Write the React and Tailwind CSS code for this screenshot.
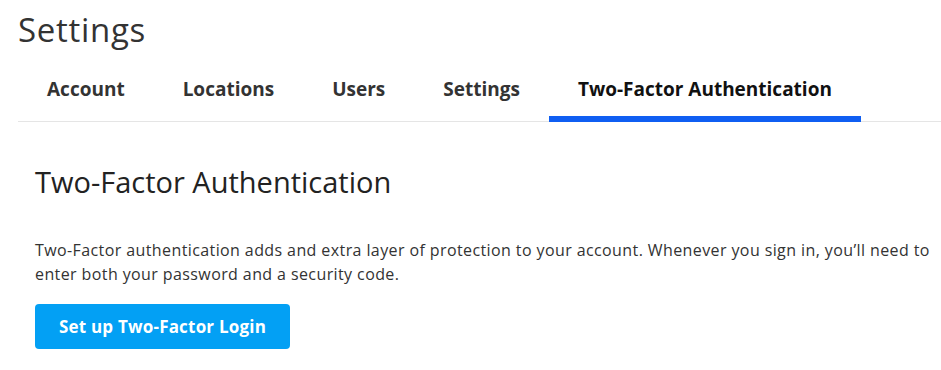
import { useState } from "react";

const tabs = ["Account", "Locations", "Users", "Settings", "Two-Factor Authentication"];

export default function App() {
  const [active, setActive] = useState("Two-Factor Authentication");

  return (
    <div className="min-h-[370px] bg-white pl-[18px] font-['Open_Sans','Lato',sans-serif] text-[#333]">
      <h1 className="pt-[10px] text-[33px] leading-[40px] font-normal tracking-[0.7px] text-[#333]">Settings</h1>

      <nav className="mt-[18px] flex border-b border-[#e5e5e5]">
        {tabs.map((t) => (
          <button
            key={t}
            onClick={() => setActive(t)}
            className={`px-[29px] pt-[8px] pb-[14px] text-[19px] font-bold leading-[26px] border-b-[6px] -mb-px ${
              active === t ? "border-[#0f5ef2] text-[#111]" : "border-transparent text-[#333]"
            }`}
          >
            {t}
          </button>
        ))}
      </nav>

      <section className="pl-[17px] pr-[4px] pt-[42px]">
        <h2 className="text-[29px] leading-[36px] font-normal text-[#222]">Two-Factor Authentication</h2>
        <p className="mt-[38px] text-[16px] leading-[24px] tracking-[0.4px] text-[#333]">
          Two-Factor authentication adds and extra layer of protection to your account. Whenever you sign in, you’ll
          need to enter both your password and a security code.
        </p>
        <button className="mt-[18px] h-[45px] w-[255px] rounded-[4px] bg-[#03a0f4] text-[17px] font-bold tracking-[0.2px] text-white">
          Set up Two-Factor Login
        </button>
      </section>
    </div>
  );
}
